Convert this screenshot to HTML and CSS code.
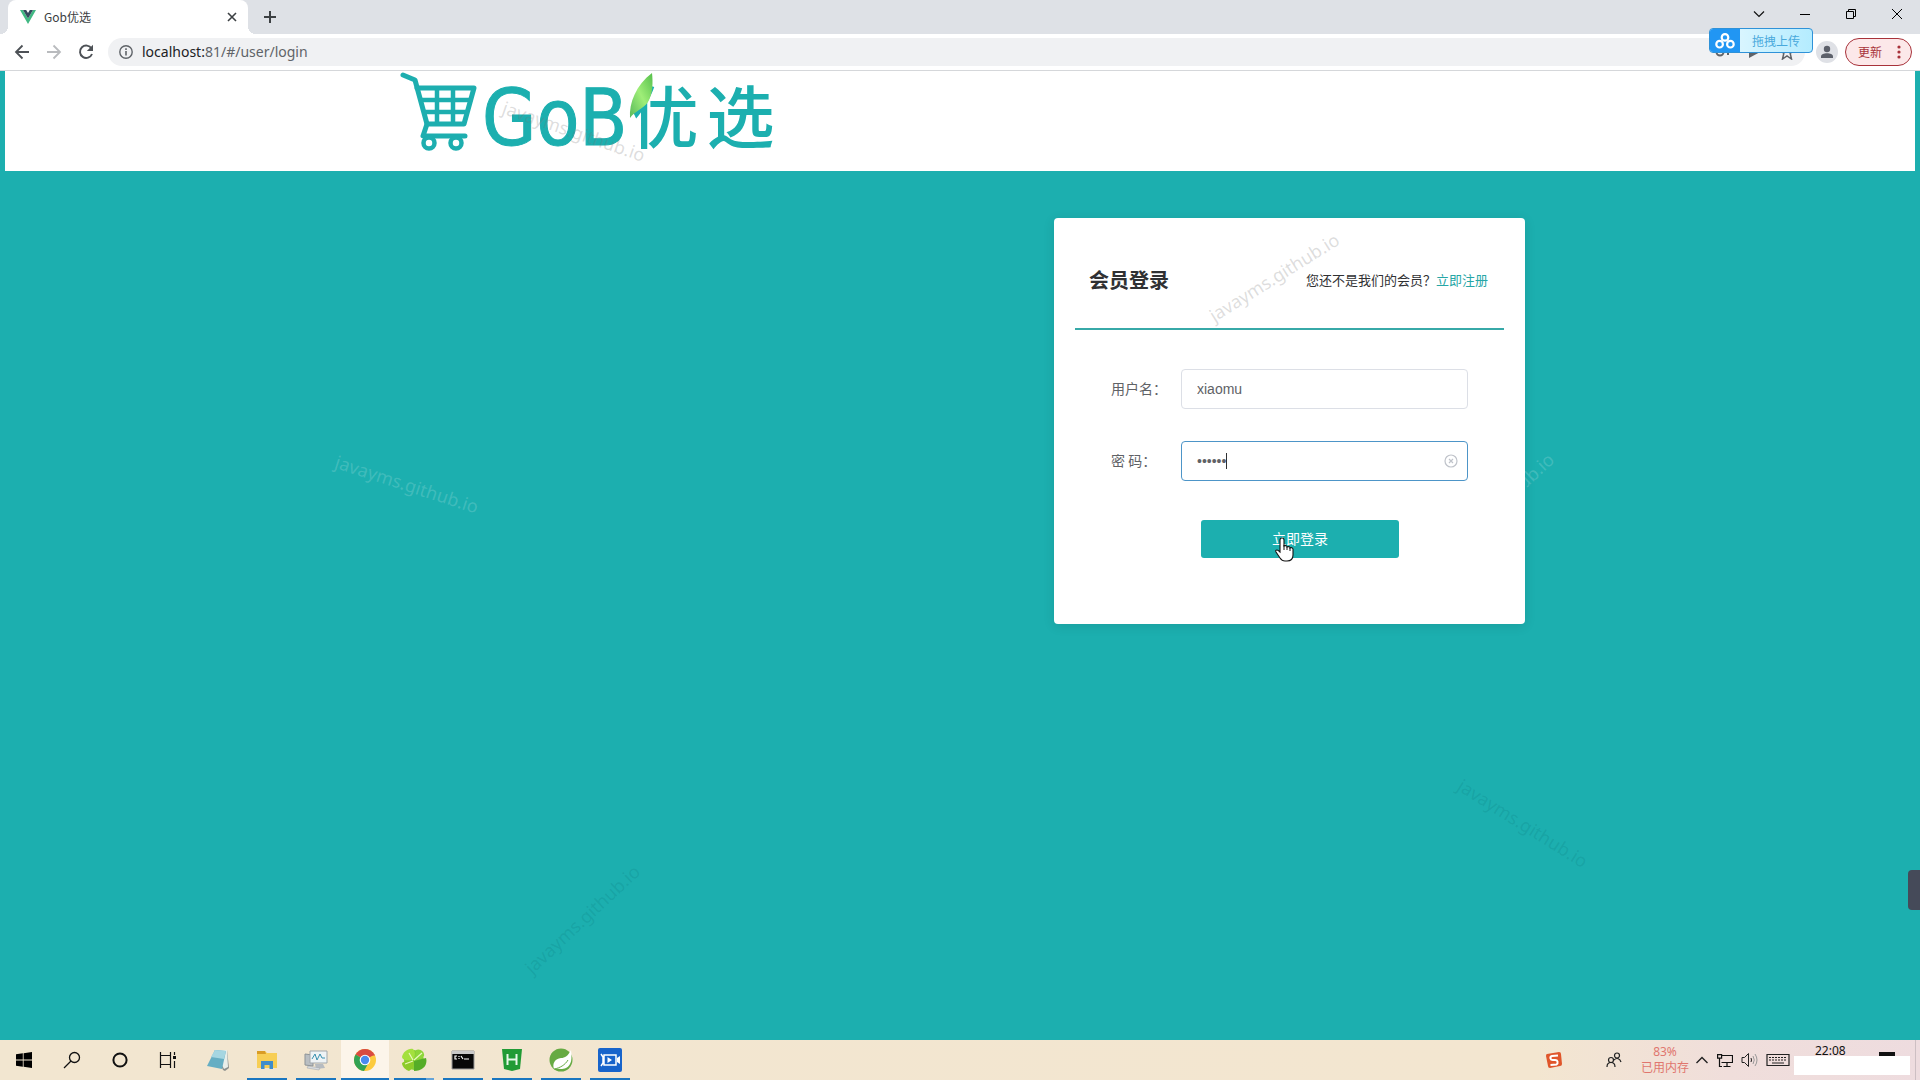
FILE: index.html
```html
<!DOCTYPE html>
<html lang="zh-CN">
<head>
<meta charset="utf-8">
<title>Gob优选</title>
<link rel="stylesheet" href="styles.css">
</head>
<body>
<div class="screen">
  <header class="tabstrip">
    <div class="tab">
      <svg class="favicon" width="16" height="14" viewBox="0 0 16 14"><path fill="#41b883" d="M0 0h3l5 8.600L13 0h3L8 14z"/><path fill="#35495e" d="M3 0h3.200L8 3l1.800-3H13L8 8.600z"/></svg>
      <span class="tab-title">Gob优选</span>
      <button class="icon-btn" aria-label="关闭标签页"><svg width="10" height="10" viewBox="0 0 10 10"><path d="M1 1l8 8M9 1l-8 8" stroke="#3c4043" stroke-width="1.600"/></svg></button>
    </div>
    <button class="icon-btn new-tab" aria-label="新标签页"><svg width="12" height="12" viewBox="0 0 12 12"><path d="M6 0v12M0 6h12" stroke="#3c4043" stroke-width="2"/></svg></button>
    <div class="window-controls">
      <button class="win-btn" aria-label="搜索标签页"><svg width="12" height="12" viewBox="0 0 12 12"><path d="M1 3.500l5 5 5-5" fill="none" stroke="#111" stroke-width="1.200"/></svg></button>
      <button class="win-btn" aria-label="最小化"><svg width="12" height="12" viewBox="0 0 12 12"><path d="M1 6.500h10" stroke="#000"/></svg></button>
      <button class="win-btn" aria-label="还原"><svg width="12" height="12" viewBox="0 0 12 12"><path d="M1.500 3.500h7v7h-7zM3.500 3.500v-2h7v7h-2" fill="none" stroke="#000"/></svg></button>
      <button class="win-btn" aria-label="关闭"><svg width="12" height="12" viewBox="0 0 12 12"><path d="M1 1l10 10M11 1L1 11" stroke="#000"/></svg></button>
    </div>
  </header>
  <nav class="toolbar">
    <button class="icon-btn nav-btn" aria-label="后退"><svg width="16" height="16" viewBox="0 0 16 16"><path d="M15 8H2M8.500 1.500L2 8l6.500 6.500" fill="none" stroke="#4d5156" stroke-width="1.800"/></svg></button>
    <button class="icon-btn nav-btn" aria-label="前进"><svg width="16" height="16" viewBox="0 0 16 16"><path d="M1 8h13M7.500 1.500L14 8l-6.500 6.500" fill="none" stroke="#b9bbbe" stroke-width="1.800"/></svg></button>
    <button class="icon-btn nav-btn" aria-label="重新加载"><svg width="16" height="16" viewBox="0 0 16 16"><path d="M13.500 4.500A6.200 6.200 0 1 0 14 10" fill="none" stroke="#4d5156" stroke-width="1.900"/><path d="M15 .800v6.200H8.800z" fill="#4d5156"/></svg></button>
    <div class="omnibox">
      <svg width="14" height="14" viewBox="0 0 14 14"><circle cx="7" cy="7" r="6.200" fill="none" stroke="#5f6368" stroke-width="1.400"/><path d="M6.200 6h1.600v4.500H6.200zM6.200 3.300h1.600V5H6.200z" fill="#5f6368"/></svg>
      <span class="url"><span class="url-host">localhost:</span>81/#/user/login</span>
      <div class="omnibox-actions">
        <svg width="16" height="16" viewBox="0 0 16 16"><circle cx="5" cy="8" r="3.500" fill="none" stroke="#5f6368" stroke-width="2"/><path d="M8 7h5v4" fill="none" stroke="#5f6368" stroke-width="2"/></svg>
        <svg width="16" height="16" viewBox="0 0 16 16"><path d="M2 1l13 6-13 7z" fill="#5f6368"/></svg>
        <svg width="16" height="16" viewBox="0 0 16 16"><path d="M8 1l2 4.700 5 .500-3.800 3.300L12.500 15 8 12l-4.500 3 1.300-5.500L1 6.200l5-.500z" fill="none" stroke="#5f6368" stroke-width="1.500"/></svg>
      </div>
    </div>
    <button class="icon-btn avatar" aria-label="用户"><svg width="22" height="22" viewBox="0 0 22 22"><circle cx="11" cy="11" r="11" fill="#dfe1e6"/><circle cx="11" cy="8" r="3.200" fill="#5c606a"/><path d="M5 17v-1.500C5 13 8 12.200 11 12.200s6 .800 6 3.300V17z" fill="#5c606a"/></svg></button>
    <button class="update">更新<svg width="4" height="14" viewBox="0 0 4 14"><g fill="#a8323a"><circle cx="2" cy="2" r="1.600"/><circle cx="2" cy="7" r="1.600"/><circle cx="2" cy="12" r="1.600"/></g></svg></button>
    <button class="upload">
      <span class="upload-icon"><svg width="20" height="16" viewBox="0 0 20 16" fill="none" stroke="#fff" stroke-width="2.200"><circle cx="10" cy="4.400" r="3.300"/><circle cx="4.600" cy="11.200" r="3.300"/><circle cx="15.400" cy="11.200" r="3.300"/></svg></span>
      <span class="upload-text">拖拽上传</span>
    </button>
  </nav>

  <div class="page">
    <div class="site-header">
      <div class="container">
        <a class="logo" href="#">
          <svg class="cart" width="78" height="80" viewBox="0 0 78 80" fill="none" stroke="#1daeaf" stroke-linecap="round" stroke-linejoin="round"><path d="M3 3l12 5 12 44-4 12h42" stroke-width="5"/><path d="M17 16h57L64 52H27" stroke-width="5"/><path d="M20 28h50M23 40h43M37 16v36M53 16v36" stroke-width="4.500" stroke-linecap="butt"/><circle cx="29" cy="71" r="5.500" stroke-width="4.500"/><circle cx="56" cy="71" r="5.500" stroke-width="4.500"/></svg>
          <span class="logo-latin">GoB</span>
          <span class="logo-cjk"><span>优</span><span>选</span></span>
          <svg class="leaf" width="24" height="48" viewBox="0 0 24 48"><defs><linearGradient id="leaf-fill" x1="0" y1="1" x2="1" y2="0"><stop offset="0" stop-color="#58b95a"/><stop offset=".5" stop-color="#9fee78"/><stop offset="1" stop-color="#55bf4b"/></linearGradient></defs><path d="M23 1c1 9 1 21-4 29C14 37 6 39 1 46 0 31 7 13 23 1z" fill="url(#leaf-fill)"/></svg>
        </a>
      </div>
    </div>
    <main class="container login-area">
      <section class="card">
        <div class="card-head">
          <h1>会员登录</h1>
          <p>您还不是我们的会员？<a href="#register">立即注册</a></p>
        </div>
        <form class="form">
          <div class="field">
            <label for="user">用户名：</label>
            <input id="user" type="text" value="xiaomu">
          </div>
          <div class="field">
            <label for="pass">密 码：</label>
            <div class="input-wrap">
              <input id="pass" class="focused" type="password" value="123456">
              <span class="caret"></span>
              <button type="button" class="icon-btn clear" aria-label="清空"><svg width="14" height="14" viewBox="0 0 14 14" fill="none" stroke="#bfc3ca" stroke-width="1.200"><circle cx="7" cy="7" r="6"/><path d="M5 5l4 4M9 5L5 9"/></svg></button>
            </div>
          </div>
          <button type="button" class="submit">立即登录</button>
        </form>
      </section>
    </main>
  </div>

  <footer class="taskbar">
    <div class="system">
      <button class="task" aria-label="开始"><svg width="16" height="16" viewBox="0 0 16 16"><path d="M0 2.300L6.800 1.300V7.600H0zM7.600 1.200L16 0v7.600H7.600zM0 8.400h6.800v6.300L0 13.700zM7.600 8.400H16V16l-8.400-1.200z"/></svg></button>
      <button class="task" aria-label="搜索"><svg width="18" height="18" viewBox="0 0 18 18" fill="none" stroke="#111" stroke-width="1.300"><circle cx="11.500" cy="6.500" r="5"/><path d="M8 10l-7 7"/></svg></button>
      <button class="task" aria-label="Cortana"><svg width="16" height="16" viewBox="0 0 16 16"><circle cx="8" cy="8" r="6.600" fill="none" stroke="#111" stroke-width="2"/></svg></button>
      <button class="task" aria-label="任务视图"><svg width="18" height="16" viewBox="0 0 18 16" fill="none" stroke="#111" stroke-width="1.200"><path d="M1.500 0v3.500h10V0M1.500 16v-3.500h10V16M1.500 3.500v9M11.500 3.500v9M15.500 0v3M15.500 9v7"/><path d="M14 4h3v3h-3z" fill="#111" stroke="none"/></svg></button>
    </div>
    <div class="apps">
      <button class="task" aria-label="记事本"><svg width="24" height="24" viewBox="0 0 24 24"><path d="M8 2h13l2 18-4 3-2-1z" fill="#8b8f8c"/><path d="M8 2h13l1 17-4 2z" fill="#e9eee9"/><path d="M9 2l11 1-4 18-15-3z" fill="#66aec3"/><path d="M9 2l11 1-2 8-13-2z" fill="#a6d6e1"/></svg></button>
      <button class="task open" aria-label="文件资源管理器"><svg width="22" height="20" viewBox="0 0 22 20"><path d="M1 1h8l2 2h10v15H1z" fill="#f7ce55"/><path d="M1 1h8l1 3H1z" fill="#d99c25"/><path d="M5 19v-8h12v8h-3.500v-4h-5v4z" fill="#3f8dcb"/></svg></button>
      <button class="task open" aria-label="性能监视器"><svg width="24" height="22" viewBox="0 0 24 22"><path d="M1 5l8 1v11l-8-1z" fill="#b9bec2" stroke="#8d9397"/><path d="M6 2h17v12H6z" fill="#eef3f5" stroke="#a1a7ac"/><path d="M8 10l3-5 2 6 3-6 2 4h3" fill="none" stroke="#3890b0"/><path d="M11 15h8l2 4-9 1z" fill="#b6bbc0"/><path d="M4 17l12 2-1 2-12-2z" fill="#d8dce0" stroke="#9ca2a6" stroke-width=".500"/></svg></button>
      <button class="task open active" aria-label="Chrome"><svg width="24" height="24" viewBox="0 0 24 24"><circle cx="12" cy="12" r="11" fill="#fccb3f"/><path d="M12 12L2.500 6.500A11 11 0 0 1 21.500 6.500z" fill="#d94b42"/><path d="M2.500 6.500A11 11 0 0 0 11 23l5-9-4-2z" fill="#32a354"/><path d="M12 6.500h9.500l.500 1H12z" fill="#d94b42"/><circle cx="12" cy="12" r="5.300" fill="#fff"/><circle cx="12" cy="12" r="4.200" fill="#4a8af0"/></svg></button>
      <button class="task open stacked" aria-label="Navicat"><svg width="26" height="24" viewBox="0 0 26 24"><circle cx="13" cy="12" r="10" fill="#86cf35"/><path d="M1 9c1-5 6-9 11-8 3 3 2 8 0 11-4 1-10 1-11-3z" fill="#a4e03e"/><path d="M15 2c4-2 9 2 8 6-2 3-6 4-9 4z" fill="#8ed63a"/><path d="M1 15c3-3 8-3 11-2 2 3 0 8-4 10-3-1-7-4-7-8z" fill="#8dcb2a"/><path d="M13 13l12-3c2 7-3 13-12 13z" fill="#55ad28"/><path d="M12 12L8 5M13 12l8-7M12 13l-8 3" stroke="#e9f8bf" stroke-width="1.200"/></svg></button>
      <button class="task open" aria-label="命令提示符"><svg width="24" height="20" viewBox="0 0 24 20"><path d="M1 1h22v18H1z" fill="#080808" stroke="#999"/><path d="M1 1h22v3H1z" fill="#c9c9c9"/><path d="M6 6H4v3h2M8 6v1M8 8v1M10 6l2 3M13 9h5" fill="none" stroke="#fff" stroke-width="1.200"/></svg></button>
      <button class="task open" aria-label="HBuilder"><svg width="22" height="24" viewBox="0 0 22 24"><path d="M1 1h20l-2 20-8 2-8-2z" fill="#219b35"/><path d="M6.500 6v11M15.500 6v11M6.500 11.500h9" stroke="#e6f8e8" stroke-width="2"/></svg></button>
      <button class="task open" aria-label="Spring"><svg width="26" height="26" viewBox="0 0 26 26"><circle cx="13" cy="13" r="11.500" fill="#67aa43"/><path d="M23 3c1 8 1 15-5 18-5 2-9 0-12 1-2-6 1-10 7-11 4 0 7-2 10-8z" fill="#fff"/><path d="M6 22c6-1 11-4 14-9" fill="none" stroke="#67aa43"/></svg></button>
      <button class="task open" aria-label="录屏"><svg width="24" height="24" viewBox="0 0 24 24"><rect width="24" height="24" rx="2" fill="#1764cb"/><path d="M3 6l2 3v6l-2 3M6 7h12v10H6z" fill="none" stroke="#fff" stroke-width="1.500"/><path d="M9.500 9l4.500 3-4.500 3zM19 10l3-2v8l-3-2z" fill="#fff"/></svg></button>
    </div>
    <div class="tray">
      <svg class="sogou" width="16" height="16" viewBox="0 0 16 16"><path d="M1 2l12-2q2 0 2 2l1 10q0 2-2 2L4 16q-2 0-2-2L0 4q0-2 1-2z" fill="#e0562b"/><path d="M12 3.500L6 4Q4 4.500 4.500 6.500T8 8t3.500 1.500-1 3L4.500 13" fill="none" stroke="#fff" stroke-width="2"/></svg>
      <svg class="people" width="16" height="16" viewBox="0 0 16 16" fill="none" stroke="#222" stroke-width="1.200"><circle cx="5" cy="8" r="2.500"/><path d="M1 15c0-6 8-6 8 0"/><circle cx="11" cy="3.500" r="2.500"/><path d="M8 8c3-3 6-1 7 2"/></svg>
      <div class="memory"><span>83%</span><span>已用内存</span></div>
      <div class="tray-icons">
        <svg width="14" height="16" viewBox="0 0 14 16"><path d="M1.500 11L7 5.500l5.500 5.500" fill="none" stroke="#222" stroke-width="1.400"/></svg>
        <svg width="16" height="16" viewBox="0 0 16 16" fill="none" stroke="#111" stroke-width="1.200"><path d="M5 3.500h10.500v7H4.500M10 10.500V14M6.500 14.500h7M2.500 6v8.500H5M.600 2.600h4v3.500h-4z"/></svg>
        <svg width="17" height="16" viewBox="0 0 17 16" fill="none" stroke="#222"><path d="M1 5.500h2.500l4-4v13l-4-4H1z"/><path d="M10 6q1 2 0 4"/><path d="M12 4q2.500 4 0 8M14 2q4 6 0 12" stroke="#999"/></svg>
        <svg width="24" height="16" viewBox="0 0 24 16" fill="none" stroke="#222"><path d="M1 2.500h22v11H1z" stroke-width="1.200"/><path d="M3 5.500h18M3 8h18" stroke-dasharray="2 1"/><path d="M6 11h12"/></svg>
      </div>
      <div class="clock">
        <time>22:08</time>
        <svg width="16" height="16" viewBox="0 0 16 16"><path d="M0 0h16v12h-5l-3 3v-3H0z" fill="#111"/></svg>
        <span class="cover"></span>
      </div>
    </div>
  </footer>

  <div class="side-handle"></div>
  <svg class="pointer" width="20" height="26" viewBox="0 0 20 26"><path d="M6 15V3q0-2 2-2t2 2v6q3-1 3 1 3-1 3 1 2-1 3 1v6q0 6-6 6h-2q-3 0-5-3L2 15q-1-2 1-2 1 0 3 2z" fill="#fff" stroke="#111" stroke-width="1.100"/><path d="M10 8v5M13 10v3M16 11v3" stroke="#111"/></svg>
  <span class="mark mark-logo">javayms.github.io</span>
  <span class="mark mark-light mark-left">javayms.github.io</span>
  <span class="mark mark-card">javayms.github.io</span>
  <span class="mark mark-light mark-behind">javayms.github.io</span>
  <span class="mark mark-teal mark-right">javayms.github.io</span>
  <span class="mark mark-teal mark-bottom">javayms.github.io</span>
</div>
</body>
</html>
```
FILE: styles.css
```css
* { box-sizing: border-box; }

:root {
  --teal: #1cafaf;
  --ui: "Noto Sans", "Noto Sans CJK SC", sans-serif;
  --cjk: "Noto Sans CJK SC", sans-serif;
}

body {
  margin: 0;
  font-family: var(--ui);
  font-size: 14px;
  color: #303133;
}

button {
  margin: 0;
  border: 0;
  background: none;
  font-family: inherit;
}

svg { display: block; flex: none; }

.screen {
  position: relative;
  display: flex;
  flex-direction: column;
  min-height: 100vh;
  overflow: hidden;
}

.icon-btn {
  display: grid;
  place-items: center;
  padding: 0;
}

/* Browser chrome */
.tabstrip {
  display: flex;
  height: 34px;
  padding-left: 8px;
  background: #dee1e6;
}

.tab {
  position: relative;
  display: flex;
  align-items: center;
  width: 240px;
  padding: 0 11px 0 12px;
  border-radius: 8px 8px 0 0;
  background: #fff;
}

.tab::before,
.tab::after {
  content: "";
  position: absolute;
  bottom: 0;
  width: 8px;
  height: 8px;
}

.tab::before { right: 100%; background: radial-gradient(circle at 0 0, transparent 8px, #fff 8px); }
.tab::after { left: 100%; background: radial-gradient(circle at 100% 0, transparent 8px, #fff 8px); }

.tab-title {
  flex: 1;
  padding-left: 8px;
  font-family: var(--cjk);
  font-size: 12px;
  line-height: 16px;
  color: #3c4043;
}

.new-tab { width: 28px; margin-left: 8px; }

.window-controls {
  display: flex;
  align-items: flex-start;
  margin-left: auto;
}

.win-btn {
  display: grid;
  place-items: center;
  width: 46px;
  height: 28px;
  padding: 0;
}

.toolbar {
  position: relative;
  display: flex;
  align-items: center;
  height: 37px;
  padding: 0 8px 0 6px;
  border-bottom: 1px solid #d5d7da;
  background: #fff;
}

.nav-btn { width: 32px; height: 28px; }

.omnibox {
  display: flex;
  flex: 1;
  align-items: center;
  height: 28px;
  margin-left: 6px;
  padding: 0 10px 0 11px;
  border-radius: 14px;
  background: #f0f1f3;
}

.url {
  padding: 0 0 2px 9px;
  font-size: 14px;
  color: #5f6368;
}

.url-host { color: #202124; }

.omnibox-actions {
  display: flex;
  gap: 16px;
  margin-left: auto;
}

.avatar { margin: 0 7px 0 11px; }

.update {
  display: flex;
  align-items: center;
  gap: 15px;
  height: 28px;
  padding: 0 10px 0 12px;
  border: 1px solid #a8323a;
  border-radius: 14px;
  background: #fce8e9;
  color: #a8323a;
  font-size: 12px;
}

.upload {
  position: absolute;
  top: -6px;
  right: 107px;
  display: flex;
  width: 104px;
  height: 25px;
  padding: 0;
  overflow: hidden;
  border: 1px solid #2f92d8;
  border-radius: 4px;
  background: linear-gradient(90deg, #e8f9ff, #b4ecff);
}

.upload-icon {
  display: grid;
  place-items: center;
  width: 30px;
  height: 100%;
  background: #2196f3;
}

.upload-text {
  flex: 1;
  align-self: center;
  font-size: 12px;
  color: #49a9dc;
}

/* Shop page */
.page {
  flex: 1;
  background: var(--teal);
}

.site-header {
  height: 100px;
  margin: 0 5px;
  background: #fff;
}

.container {
  max-width: 1130px;
  margin: 0 auto;
}

.logo {
  position: relative;
  display: flex;
  width: 390px;
  height: 100px;
  padding: 1px 0 0 5px;
  color: var(--teal);
  text-decoration: none;
}

.logo-latin {
  padding-left: 4px;
  font-family: "DejaVu Sans Condensed", "Noto Sans", sans-serif;
  font-size: 78px;
  line-height: 92px;
  -webkit-text-stroke: 1px var(--teal);
}

.logo-cjk {
  display: flex;
  gap: 8px;
  padding-left: 3px;
  font-family: var(--cjk);
  font-size: 68px;
  font-weight: 500;
  line-height: 84px;
}

.leaf {
  position: absolute;
  top: 1px;
  left: 234px;
}

.login-area {
  display: flex;
  justify-content: flex-end;
  padding: 47px 0;
}

.card {
  width: 471px;
  padding: 0 21px 66px;
  border-radius: 4px;
  background: #fff;
  box-shadow: 0 2px 12px rgba(0, 0, 0, .1);
  font-family: var(--cjk);
}

.card-head {
  display: flex;
  align-items: center;
  justify-content: space-between;
  height: 112px;
  padding: 12px 16px 0 14px;
  border-bottom: 2px solid #37a9a8;
}

.card-head h1 {
  margin: 0;
  font-size: 20px;
}

.card-head p {
  margin: 0;
  font-size: 13px;
}

.card-head a {
  color: #26a6a6;
  text-decoration: none;
}

.form { padding: 39px 36px 0; }

.field {
  display: flex;
  align-items: center;
  margin-bottom: 32px;
}

.field label {
  width: 70px;
  padding-bottom: 2px;
  color: #606266;
}

.field input {
  flex: 1;
  width: 100%;
  min-width: 0;
  height: 40px;
  padding: 0 15px;
  border: 1px solid #dcdfe6;
  border-radius: 4px;
  outline: 0;
  background: #fff;
  color: #606266;
  font-family: "Liberation Sans", Arial, sans-serif;
  font-size: 14px;
}

.field .focused { border-color: #4d95c8; }

.input-wrap {
  position: relative;
  display: flex;
  flex: 1;
}

.caret {
  position: absolute;
  top: 12px;
  left: 45px;
  width: 1px;
  height: 16px;
  background: #303133;
}

.clear {
  position: absolute;
  top: 13px;
  right: 10px;
}

.submit {
  display: block;
  width: 198px;
  height: 38px;
  margin: 39px 0 0 90px;
  padding: 0 0 2px;
  border-radius: 3px;
  background: var(--teal);
  color: #fff;
  font-size: 14px;
}

/* Taskbar */
.taskbar {
  display: flex;
  height: 40px;
  background: linear-gradient(90deg, #f2e6d0 0%, #f3e6d0 80%, #f0dedb 90%, #eedcdf 100%);
}

.system { display: flex; }

.apps {
  display: flex;
  gap: 1px;
  padding-left: 2px;
}

.task {
  position: relative;
  display: grid;
  place-items: center;
  width: 48px;
  height: 40px;
  padding: 0;
}

.open::after {
  content: "";
  position: absolute;
  right: 4px;
  bottom: 0;
  left: 4px;
  height: 2px;
  background: #1a76c0;
}

.active { background: #fcf5ea; }
.active::after { right: 0; left: 0; }
.stacked::after { background: linear-gradient(90deg, #1a76c0 80%, #64a3d8 80%); }

.tray {
  display: flex;
  align-items: center;
  margin-left: auto;
  margin-right: 4px;
  border-right: 1px solid #cdbfc3;
}

.people { margin-left: 44px; }

.memory {
  display: flex;
  flex-direction: column;
  align-items: center;
  margin: 0 6px 0 19px;
  font-size: 12px;
  line-height: 16px;
  color: #e0766e;
}

.tray-icons {
  display: flex;
  gap: 8px;
}

.clock {
  position: relative;
  display: flex;
  align-self: stretch;
  justify-content: space-between;
  width: 125px;
  padding: 0 20px 0 25px;
  line-height: 22px;
  color: #111;
}

.clock time { font-size: 12px; }
.clock svg { margin-top: 12px; }

.cover {
  position: absolute;
  top: 16px;
  right: 5px;
  width: 116px;
  height: 19px;
  background: #fff;
}

/* Things lying over the page */
.side-handle {
  position: absolute;
  right: 0;
  top: 870px;
  width: 12px;
  height: 40px;
  border-radius: 4px 0 0 4px;
  background: #454a59;
}

.pointer {
  position: absolute;
  top: 537px;
  left: 1274px;
}

.mark {
  position: absolute;
  font-size: 18px;
  line-height: 24px;
  color: rgba(120, 120, 120, .25);
  pointer-events: none;
}

.mark-light { color: rgba(255, 255, 255, .17); }
.mark-teal { color: rgba(0, 90, 100, .14); }
.mark-logo { left: 574px; top: 131px; transform: translate(-50%, -50%) rotate(19deg); }
.mark-left { left: 407px; top: 484px; transform: translate(-50%, -50%) rotate(18deg); }
.mark-card { left: 1274px; top: 277px; transform: translate(-50%, -50%) rotate(-32deg); }
.mark-behind { left: 1496px; top: 507px; transform: translate(-50%, -50%) rotate(-43deg); clip-path: inset(-10px -10px -10px 111px); }
.mark-right { left: 1523px; top: 823px; transform: translate(-50%, -50%) rotate(32deg); }
.mark-bottom { left: 582px; top: 919px; transform: translate(-50%, -50%) rotate(-43deg); }
```
